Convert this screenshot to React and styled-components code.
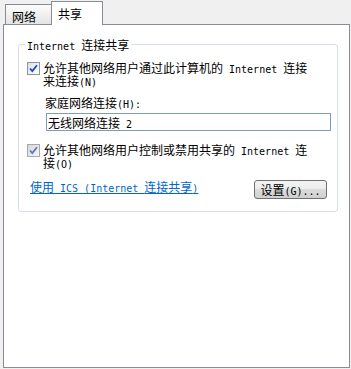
import React from 'react';
import styled, { createGlobalStyle } from 'styled-components';

const GlobalStyle = createGlobalStyle`
  html, body {
    margin: 0;
    padding: 0;
    background: #f0f0f0;
  }
  body {
    width: 351px;
    height: 369px;
    overflow: hidden;
    font-family: "Noto Sans CJK SC", sans-serif;
    font-size: 12px;
    line-height: 13px;
    color: #000;
  }
`;

const Window = styled.div`
  width: 351px;
  height: 369px;
  box-sizing: border-box;
  padding: 0 1px 1px 3px;
  display: flex;
  flex-direction: column;
`;

const TabStrip = styled.div`
  display: flex;
  align-items: flex-end;
  height: 24px;
  padding-left: 2px;
`;

const Tab = styled.div`
  box-sizing: border-box;
  width: ${p => p.$w}px;
  height: ${p => (p.$active ? 24 : 20)}px;
  margin-bottom: ${p => (p.$active ? -1 : 0)}px;
  margin-left: ${p => (p.$first ? 0 : -1)}px;
  border: 1px solid #898c95;
  border-bottom: none;
  background: ${p => (p.$active ? '#fff' : 'linear-gradient(#fcfcfc, #e4e4e4)')};
  position: relative;
  z-index: ${p => (p.$active ? 1 : 0)};
  padding: 5px 0 0 6px;
`;

const Panel = styled.div`
  flex: 1;
  background: #fff;
  border: 1px solid #898c95;
  padding: 13px 11px 0 14px;
`;

const Group = styled.fieldset`
  margin: 0;
  border: 1px solid #d5dfe5;
  border-radius: 3px;
  padding: 10px 8px 12px 8px;
  min-width: 0;
`;

const Legend = styled.legend`
  padding: 0 2px;
  margin-left: -2px;
  line-height: 13px;
`;

const Body = styled.div`
  display: flex;
  flex-direction: column;
`;

const CheckRow = styled.div`
  display: flex;
  align-items: flex-start;
  gap: 3px;
  margin-top: ${p => p.$top || 0}px;
`;

const Box = styled.span`
  flex: none;
  width: 13px;
  height: 13px;
  box-sizing: border-box;
  margin-top: 1px;
  border: 1px solid ${p => (p.$dim ? '#a4a9b0' : '#8a96a4')};
  background: ${p => (p.$dim ? 'linear-gradient(135deg, #d8d8d8, #f4f4f4)' : 'linear-gradient(135deg, #dcdfe3, #fff)')};
  display: flex;
  align-items: center;
  justify-content: center;
`;

const CheckText = styled.span`
  width: 268px;
`;

const Latin = styled.span`
  font-family: "DejaVu Sans Mono", "Liberation Mono", monospace;
  font-size: 10px;
  line-height: 0;
`;

const FieldLabel = styled.div`
  margin: 9px 0 0 18px;
`;

const TextBox = styled.div`
  box-sizing: border-box;
  width: 285px;
  height: 18px;
  margin: 4px 0 0 19px;
  border: 1px solid #7f9db9;
  padding: 2px 0 0 1px;
  background: #fff;
`;

const Footer = styled.div`
  display: flex;
  justify-content: space-between;
  align-items: flex-start;
  margin-top: 11px;
`;

const Link = styled.a`
  margin: 0 0 0 3px;
  color: #0066cc;
  text-decoration: underline;
  cursor: pointer;
`;

const Button = styled.button`
  box-sizing: border-box;
  width: 73px;
  height: 19px;
  margin-right: 2px;
  padding: 0;
  border: 1px solid #707070;
  border-radius: 3px;
  background: linear-gradient(#f4f4f4, #ebebeb 50%, #dcdcdc 50%, #cfcfcf);
  font-family: inherit;
  font-size: 12px;
  line-height: 13px;
  color: #000;
`;

const Check = ({ dim }) => (
  <Box $dim={dim}>
    <svg width="9" height="9" viewBox="0 0 9 9">
      <path
        d="M1 4.5 L3.3 7 L8 1.2"
        fill="none"
        stroke={dim ? '#5f79b8' : '#2147b4'}
        strokeWidth="1.8"
      />
    </svg>
  </Box>
);

export default function App() {
  return (
    <Window>
      <GlobalStyle />
      <TabStrip>
        <Tab $first $w={47}>网络</Tab>
        <Tab $active $w={52}>共享</Tab>
      </TabStrip>
      <Panel>
        <Group>
          <Legend><Latin>Internet </Latin>连接共享</Legend>
          <Body>
            <CheckRow>
              <Check />
              <CheckText>
                允许其他网络用户通过此计算机的<Latin> Internet </Latin>连接来连接<Latin>(N)</Latin>
              </CheckText>
            </CheckRow>
            <FieldLabel>家庭网络连接<Latin>(H):</Latin></FieldLabel>
            <TextBox>无线网络连接<Latin> 2</Latin></TextBox>
            <CheckRow $top={12}>
              <Check dim />
              <CheckText>
                允许其他网络用户控制或禁用共享的<Latin> Internet </Latin>连接<Latin>(O)</Latin>
              </CheckText>
            </CheckRow>
            <Footer>
              <Link>使用<Latin> ICS (Internet </Latin>连接共享<Latin>)</Latin></Link>
              <Button>设置<Latin>(G)...</Latin></Button>
            </Footer>
          </Body>
        </Group>
      </Panel>
    </Window>
  );
}
